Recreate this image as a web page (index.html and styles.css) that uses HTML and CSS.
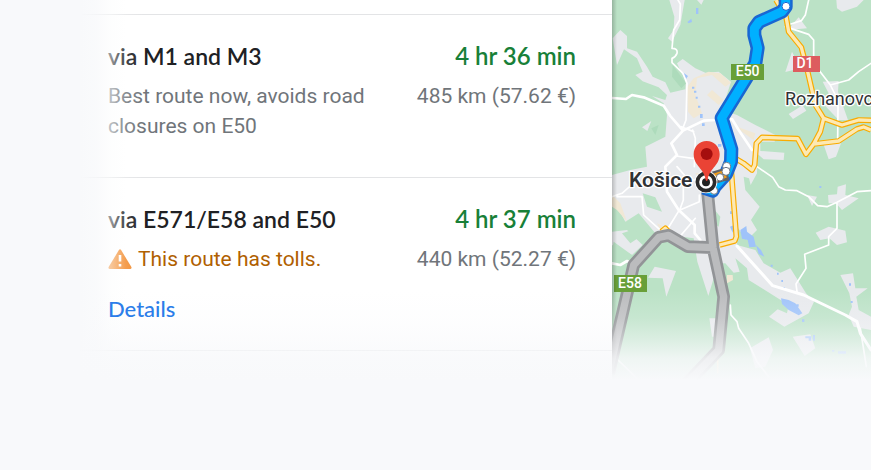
FILE: index.html
```html
<!DOCTYPE html>
<html lang="en">
<head>
<meta charset="utf-8">
<title>Routes to Košice</title>
<link rel="stylesheet" href="styles.css">
</head>
<body>
<main class="directions">
  <ul class="routes">
    <li class="route">
      <div class="row">
        <h2 class="name">via M1 and M3</h2>
        <span class="time">4 hr 36 min</span>
      </div>
      <div class="row">
        <p class="note">Best route now, avoids road closures on E50</p>
        <span class="distance">485 km (57.62 €)</span>
      </div>
    </li>
    <li class="route">
      <div class="row">
        <h2 class="name">via E571/E58 and E50</h2>
        <span class="time">4 hr 37 min</span>
      </div>
      <div class="row">
        <p class="note toll">
          <svg class="warning" viewBox="0 0 24 20" aria-hidden="true"><path d="M10.9 1.1Q12 -.5 13.100 1.100L23.400 18Q24 20 22 20H2Q0 20 .6 18Z" fill="#f28b2c"/><path d="M12 6v6.500M12 15v2.500" stroke="#fff" stroke-width="2.600"/></svg>
          This route has tolls.
        </p>
        <span class="distance">440 km (52.27 €)</span>
      </div>
      <a class="details" href="#details">Details</a>
    </li>
  </ul>
  <section class="map" aria-label="Map">
    <svg class="map-canvas" viewBox="0 0 777 1410" preserveAspectRatio="xMinYMin slice">
      <rect width="2400" height="1600" fill="#bbe2c6"/>
      <g fill="#e8eaed">
        <path d="M172 0L187 50 185 90 168 115 180 125 205 75 218 0ZM255 0H275L268 14Z"/>
        <path d="M2 115L25 90 45 108V145L75 155 105 200 122 230 160 247 175 278 220 268 222 240 210 222 195 190 212 177 250 205 280 218 320 215 357 245 330 330 375 345 430 375 490 405 488 425 445 425 445 453 517 458 515 480 455 478 437 462 435 520 416 555 411 535 395 530 400 570 443 620 417 660 435 690 405 720 375 680 375 735 430 750 455 790 505 818 535 805 570 860 582 880 606 905 590 940 517 980 471 950 497 928 525 940 530 915 410 840 405 805 370 775 383 815 365 818 340 790 310 790 305 835 289 888 256 785 245 715 130 700 80 640 40 665 0 590V525L55 510 105 500 100 440 160 410 165 345 155 310 120 288 160 300 165 285 140 262 92 244 70 225 92 215 75 175 36 148 15 195Z"/>
        <path d="M90 382L118 363 106 393ZM0 695L45 690 92 735 60 765 0 735ZM128 800L192 813 163 890 152 835 108 833ZM292 955H325L315 1010H300Z"/>
        <path d="M540 155L565 205 520 216ZM560 52L585 85 527 90ZM673 0H755L735 20 690 35 675 25ZM632 245L680 243 678 275 708 360 680 360 632 310 650 280ZM530 342L572 316 583 332 543 357ZM632 425L687 430 672 470 650 478ZM585 585L615 590 600 618ZM648 585L675 583 677 560 702 553 700 585 740 595 690 630 672 610 650 610ZM611 698L650 680 700 692 705 727 675 735 652 715 625 720ZM685 825L723 820 730 865 767 865 733 890 740 930 777 950V990L725 980 710 945 720 920 712 880ZM414 1045L470 1012 483 1050 460 1100 430 1105ZM542 1010L595 1003 610 1045 578 1068Z"/>
      </g>
      <g fill="#f1e8d5">
        <path d="M225 262L245 235 290 215 325 220 357 248 340 260 300 225 255 235 250 285 270 340 245 355 228 335ZM300 270L335 300 320 315 285 285ZM0 585L25 610 45 665 15 630 0 620ZM375 380L430 400 425 420 390 395ZM345 825L362 825 363 840 345 850ZM250 520H285V560ZM135 670L175 690 150 700Z"/>
      </g>
      <g fill="#bbe2c6">
        <path d="M92 580L130 592 150 635 105 620ZM300 620L325 650 320 680 300 665ZM30 700L55 730 100 700 60 690ZM5 725L60 765 35 785 0 750Z"/>
      </g>
      <path fill="#addbbb" d="M182 195L222 250 208 265 180 230ZM118 385L140 375 130 405Z"/>
      <g fill="#9fc3fa">
        <path d="M252 24H259V42H252ZM226 66L238 56 240 66 230 70ZM210 215L228 228 222 237ZM240 260H247V266H240ZM246 272H253V278H246ZM251 290H257V296H251ZM258 317H265V323H258ZM264 342H272V354H264ZM270 370H278V378H270ZM318 432H328V440H318ZM354 634H360V642H354ZM354 680L366 675 362 698ZM385 690L403 678 405 695 425 710 432 740 412 742 407 720 390 716ZM432 735L447 750 457 770 440 762ZM476 794H482V800H476ZM495 818H500V824H495ZM508 840H513V846H508ZM514 862H519V868H514ZM507 895L530 900 550 910 571 940 560 946 530 930 510 912ZM553 913H560V920H553ZM570 958H577V966H570ZM580 1009H598V1022H590V1015H580ZM603 1005H609V1022H603ZM711 850H717V857H711ZM716 903H722V909H716ZM660 1050H667V1055H660ZM678 1054H702V1061H678ZM622 558H628V564H622Z"/>
      </g>
      <g fill="none" stroke="#fff" stroke-linecap="round" stroke-linejoin="round">
        <path stroke-width="5" d="M198 0L205 12 203 60 185 90 180 145Q198 145 195 160 190 172 180 175V188L213 220 225 250 222 360 211 388M242 390L250 415 247 500M192 468L247 476M0 590L30 580 75 540M15 590L90 590 95 645 150 695M208 380L245 395M195 500L230 540 320 540M214 540V600L205 625 165 690M250 655L207 706M262 585V605L204 630M355 915L357 945 375 965 380 985 410 1030 435 1085 470 1130M18 1080L80 1140M590 0L580 45 568 62 537 72M520 80L590 103 605 120 605 190 655 255 670 285 678 320 677 420M655 255L710 240 740 215 777 190M435 500L482 532 500 560 520 570 555 572 590 590 617 617 645 620 675 607 735 575 777 572M675 607V685L650 710V735L578 763 582 805 552 852 555 875M745 985L763 1100"/>
        <path stroke-width="8" d="M0 294L42 297 60 285 95 292 155 317 175 348 213 392 275 362 310 360 360 357 380 390 400 420 420 450M213 392L178 430 195 465 160 500 165 575 200 630 248 675V700L265 720M0 790L25 795 45 783 60 790"/>
        <path stroke-width="9" d="M375 738L482 857 575 885 700 945 735 965 745 1000 777 1050"/>
      </g>
      <g fill="none" stroke-linejoin="round">
        <g stroke="#f9ab00" stroke-width="17">
          <path d="M492 0L522 50 530 95 568 142 587 215 610 315 635 355 690 375 740 360 777 361M635 355L625 395 605 432 582 463 557 416 450 412 433 430 428 495 420 510 395 490 370 475M605 432L680 423 735 387 755 381 777 390M358 515L373 710 368 723 323 735M148 695L160 685 170 695"/>
        </g>
        <g stroke="#fde9b3" stroke-width="10">
          <path d="M492 0L522 50 530 95 568 142 587 215 610 315 635 355 690 375 740 360 777 361M635 355L625 395 605 432 582 463 557 416 450 412 433 430 428 495 420 510 395 490 370 475M605 432L680 423 735 387 755 381 777 390M358 515L373 710 368 723 323 735M148 695L160 685 170 695"/>
        </g>
        <path stroke="#fde9b3" stroke-width="5" d="M317 1065V1120"/>
        <g stroke="#929497" stroke-width="38">
          <path d="M285 560L303 743 335 890 320 1050 225 1150M-10 1120L65 795 140 712 170 706 228 740 303 743"/>
        </g>
        <g stroke="#bbbcbe" stroke-width="22">
          <path d="M285 560L303 743 335 890 320 1050 225 1150M-10 1120L65 795 140 712 170 706 228 740 303 743"/>
        </g>
        <path stroke="#1967d2" stroke-width="42" d="M521 -10V20L510 35 441 66 427 85V105L437 144 430 190 329 354 358 448 357 485 342 522 308 560 302 572 275 563"/>
        <path stroke="#00b0ff" stroke-width="27" d="M521 -10V20L510 35 441 66 427 85V105L437 144 430 190 329 354 358 448 357 485 342 522 308 560 302 572 275 563"/>
        <path stroke="#5f6368" stroke-width="38" d="M300 535L325 527 348 522"/>
        <path stroke="#f09d1c" stroke-width="24" d="M300 535L325 527 340 521"/>
      </g>
      <g fill="#fff" stroke="#6b7785" stroke-width="3">
        <circle cx="522" cy="19" r="12" stroke="#1967d2"/><circle cx="344" cy="499" r="12"/><circle cx="342" cy="514" r="12"/><circle cx="324" cy="532" r="11"/><circle cx="306" cy="572" r="11"/>
      </g>
      <circle cx="282" cy="546" r="34" fill="#fff"/>
      <circle cx="282" cy="546" r="26" fill="#fff" stroke="#2b2b2b" stroke-width="11"/>
      <circle cx="282" cy="547" r="12" fill="#222"/>
      <path fill="#ea4335" d="M284 423C262 423 245 440 245 463 245 498 278 507 281 540Q284 546 287 540C290 507 323 498 323 463 323 440 306 423 284 423Z"/>
      <circle cx="284" cy="462" r="18" fill="#a50e0e"/>
      <g class="shield">
        <rect x="357" y="192" width="99" height="48" fill="#689f38"/><text x="407" y="229">E50</text>
        <rect x="6" y="825" width="99" height="51" fill="#689f38"/><text x="54" y="865">E58</text>
        <rect x="543" y="168" width="81" height="48" fill="#dd5c5f"/><text x="579" y="205">D1</text>
      </g>
      <text class="town" x="519" y="315">Rozhanovce</text>
      <text class="city" x="51" y="561">Košice</text>
    </svg>
  </section>
</main>
</body>
</html>
```
FILE: styles.css
```css
* {
  box-sizing: border-box;
}

body {
  margin: 0;
  background: #f8f9fb;
  font-family: Roboto, "Liberation Sans", sans-serif;
  font-size: 21px;
  line-height: 30px;
  color: #70757a;
}

.directions {
  position: relative;
  display: grid;
  grid-template-columns: 612fr 259fr;
  min-height: 100vh;
  overflow: hidden;
}

/* Fades the panel and map into the page background */
.directions::after {
  content: "";
  position: absolute;
  inset: 0;
  pointer-events: none;
  background:
    linear-gradient(to bottom, rgba(248, 249, 251, 0) 290px, rgba(248, 249, 251, 0.2) 318px, rgba(248, 249, 251, 0.5) 338px, rgba(248, 249, 251, 0.85) 358px, #f8f9fb 380px),
    linear-gradient(to right, #f8f9fb 80px, rgba(248, 249, 251, 0.8) 96px, rgba(252, 253, 253, 0.5) 112px, rgba(255, 255, 255, 0.16) 126px, rgba(255, 255, 255, 0) 144px);
}

.routes {
  margin: 0;
  padding: 14px 0 0;
  list-style: none;
  background: #fff;
}

.route {
  padding: 27px 36px 36px 108px;
  border-top: 1px solid #e3e4e6;
}

.route:last-child {
  padding-bottom: 24px;
  box-shadow: 0 1px #e3e4e6;
}

.row {
  display: flex;
  justify-content: space-between;
  gap: 32px;
}

.row + .row {
  margin-top: 11px;
}

.name,
.time {
  margin: 0;
  font-family: Lato, "Open Sans", sans-serif;
  font-size: 23px;
  font-weight: 600;
  line-height: 28px;
  color: #202124;
}

.time {
  font-size: 24px;
  color: #188038;
}

.note {
  flex: 1;
  margin: 0;
}

.toll {
  display: flex;
  align-items: center;
  gap: 6px;
  color: #b06000;
}

.warning {
  width: 24px;
  height: 20px;
}

.distance,
.time {
  white-space: nowrap;
}

.details {
  position: relative;
  z-index: 1;
  display: inline-block;
  margin-top: 20px;
  padding-bottom: 2px;
  font-family: Lato, "Open Sans", sans-serif;
  font-size: 22px;
  font-weight: 500;
  color: #2b7de9;
  text-decoration: none;
}

.map {
  position: relative;
  min-width: 0;
  overflow: hidden;
  background: #bbe2c6;
}

.map::after {
  content: "";
  position: absolute;
  inset: 0;
  background: linear-gradient(to right, rgba(0, 0, 0, 0.2), rgba(0, 0, 0, 0) 5px);
}

.map-canvas {
  display: block;
  width: 100%;
  height: 100%;
}

.shield text {
  font-size: 42px;
  font-weight: 500;
  fill: #fff;
  text-anchor: middle;
}

.town,
.city {
  fill: #303235;
  stroke: #fff;
  stroke-width: 8px;
  stroke-linejoin: round;
  paint-order: stroke;
}

.town {
  font-size: 54px;
}

.city {
  font-size: 63px;
  font-weight: 600;
}
```
